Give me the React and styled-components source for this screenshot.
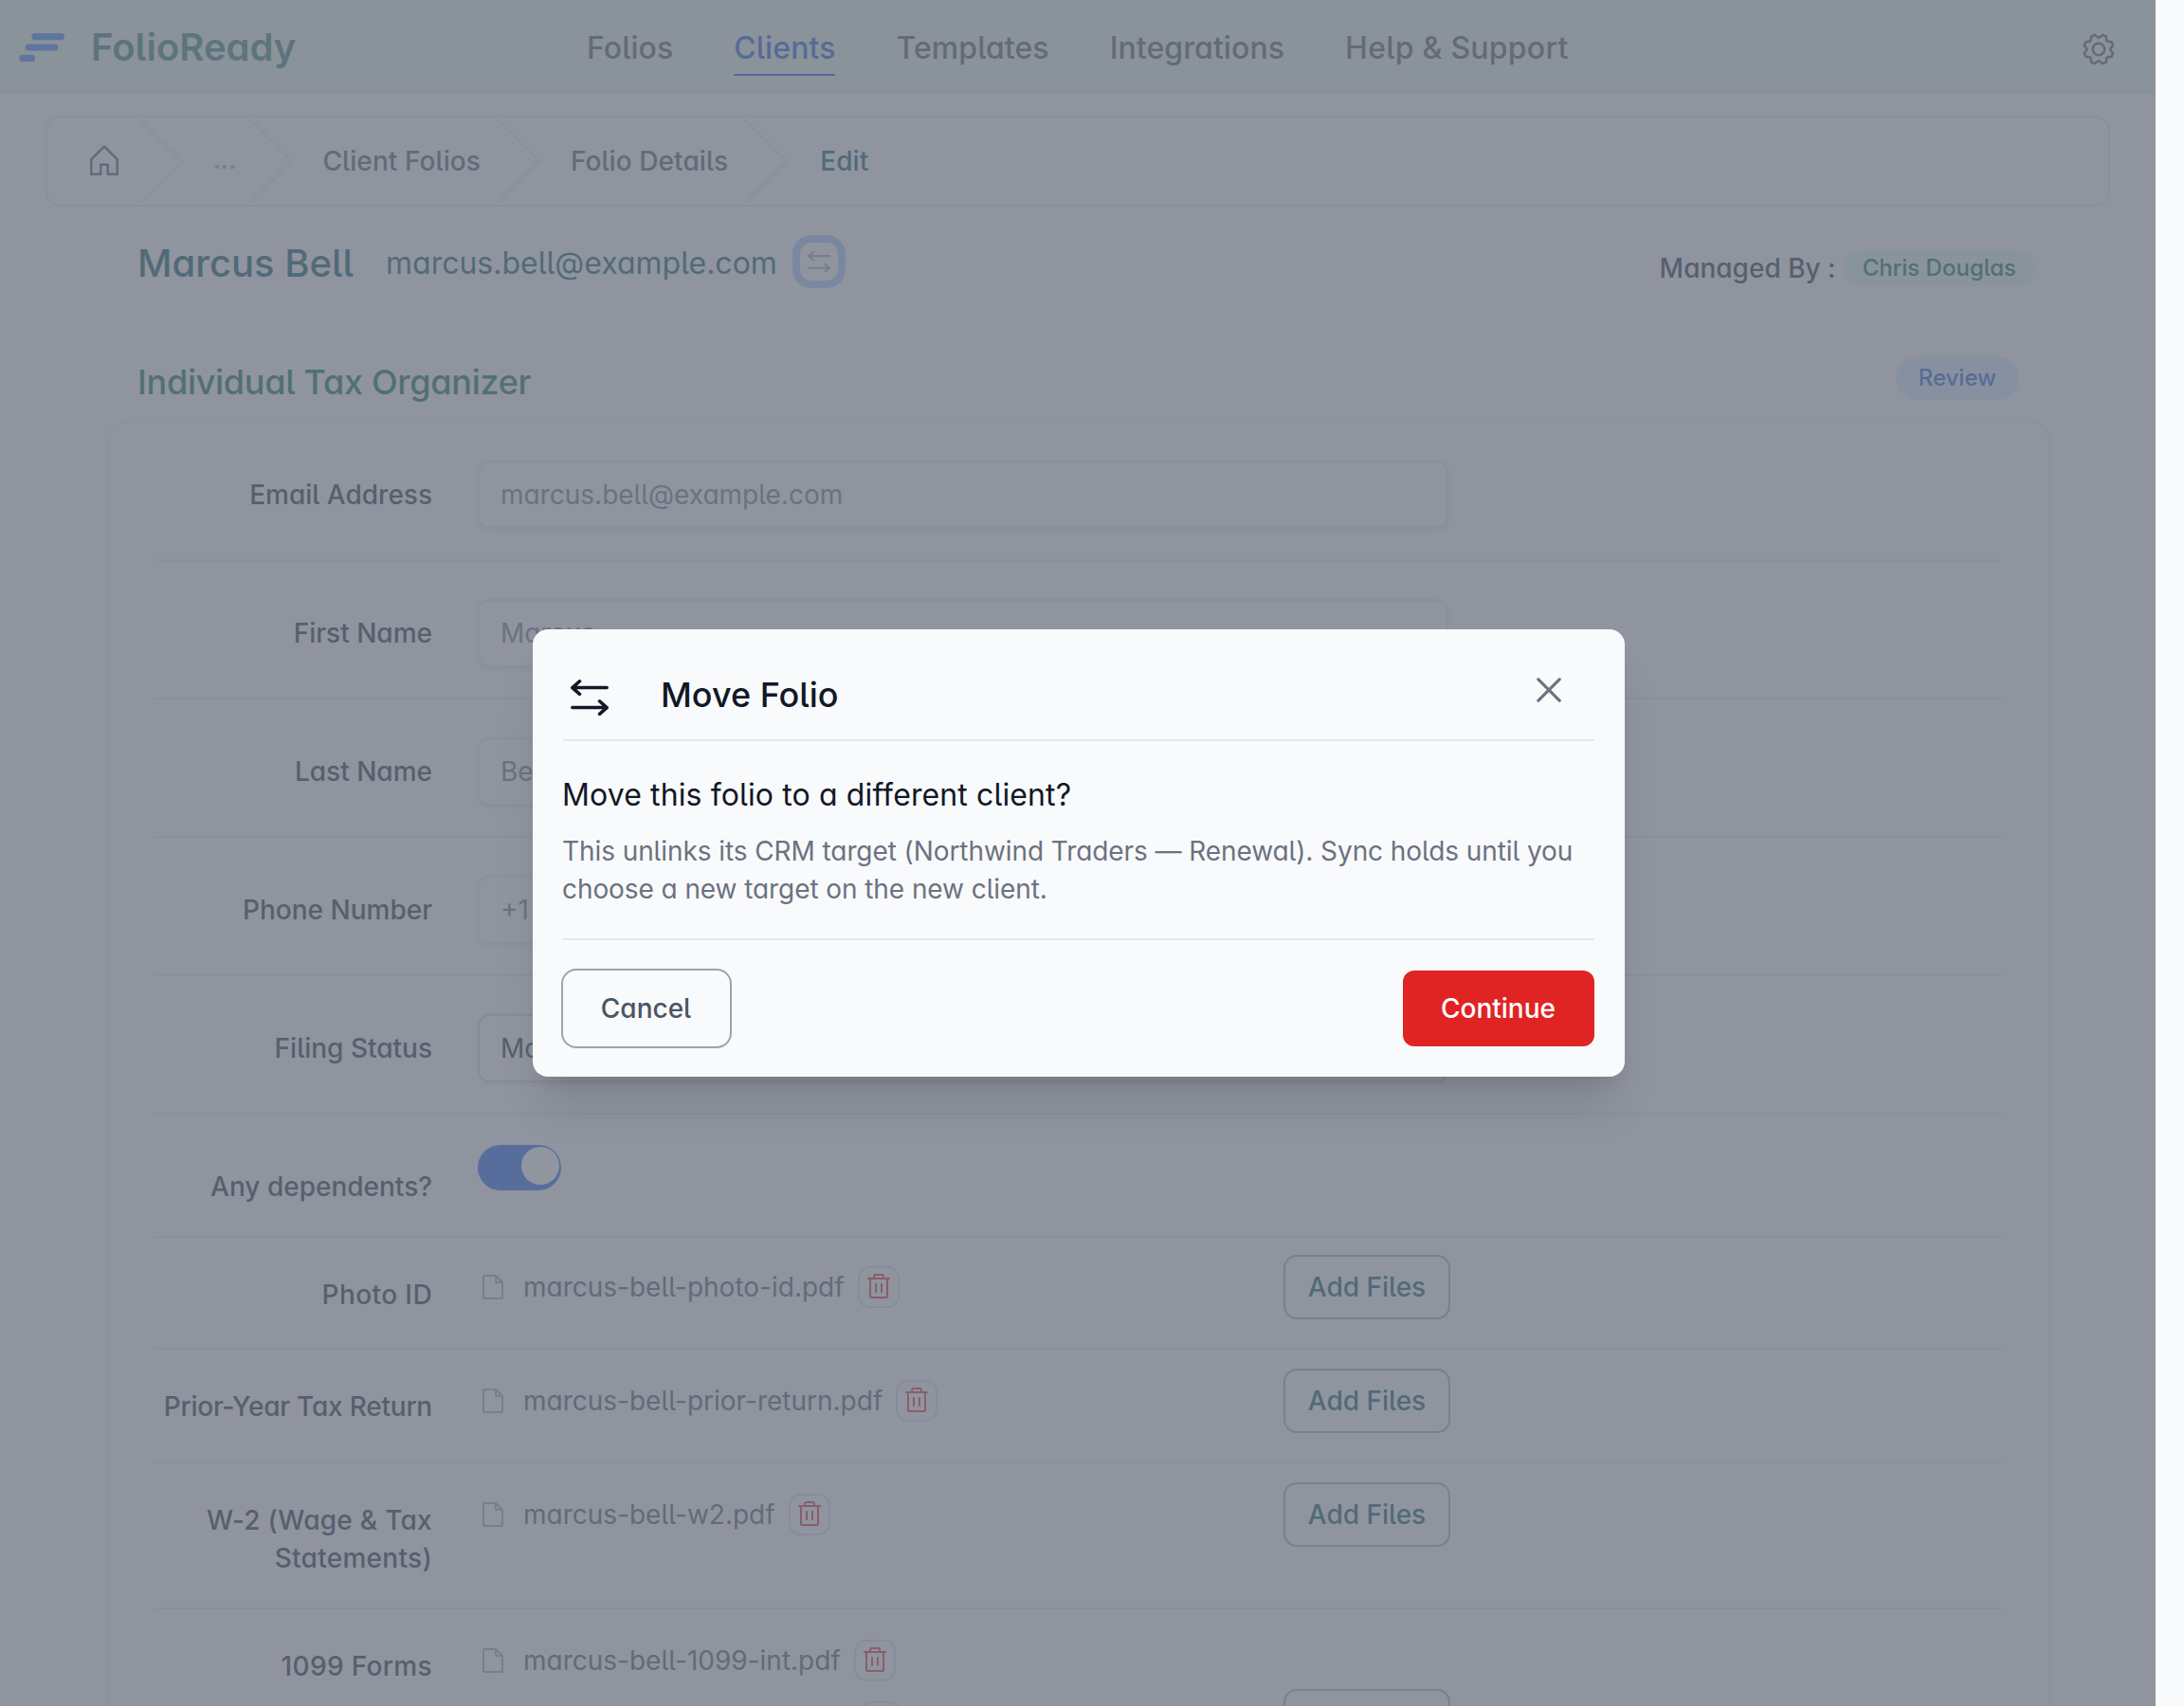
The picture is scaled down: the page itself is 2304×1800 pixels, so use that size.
import React from 'react';
import styled, { createGlobalStyle, css } from 'styled-components';
import { PiFile, PiGear, PiHouse, PiTrash, PiX } from 'react-icons/pi';

const c = {
  page: '#f9fafb',
  line: '#e5e7eb',
  gray400: '#9ca3af',
  gray500: '#6b7280',
  gray600: '#4b5563',
  gray800: '#1f2937',
  gray900: '#111827',
  teal: '#05535f',
  green: '#046c4e',
  blue: '#1a56db',
  blueSolid: '#1c64f2',
  red: '#e02424',
};

const GlobalStyle = createGlobalStyle`
  * { box-sizing: border-box; }
  body {
    margin: 0;
    background: ${c.page};
    font-family: Inter, 'Liberation Sans', sans-serif;
    font-feature-settings: 'cv11', 'cv05';
    font-size: 28px;
    line-height: 40px;
    color: ${c.gray800};
  }
  button { font: inherit; font-feature-settings: inherit; padding: 0; border: 0; background: none; }
  svg { display: block; flex: none; }
`;

const Viewport = styled.div`
  position: relative;
  width: 2274px;
  height: 1800px;
  overflow: hidden;
`;

const TopBar = styled.header`
  display: flex;
  align-items: flex-start;
  height: 98px;
  padding-left: 20px;
  padding-right: 40px;
  background: rgb(230, 241, 229);
  border-bottom: 2px solid ${c.line};
`;

const Brand = styled.div`
  display: flex;
  gap: 26px;
  width: 599px;
  padding-top: 26px;
  font-size: 40px;
  font-weight: 600;
  line-height: 48px;
  color: rgb(52, 124, 118);

  svg { margin-top: 9px; }
`;

const Nav = styled.nav`
  display: flex;
  gap: 64px;
  flex: 1;
  padding-top: 27px;
`;

const NavLink = styled.a`
  padding-bottom: 3px;
  font-size: 32px;
  font-weight: 500;
  line-height: 48px;
  letter-spacing: ${(p) => p.$tracking || '0.08px'};
  white-space: nowrap;
  color: ${(p) => (p.$active ? c.blue : c.gray600)};
  border-bottom: 2px solid ${(p) => (p.$active ? c.blue : 'transparent')};
`;

const SettingsButton = styled.button`
  margin-top: 32px;
  color: ${c.gray600};
`;

const Crumbs = styled.nav`
  display: flex;
  align-items: center;
  height: 96px;
  margin: 24px 48px 0;
  padding-left: 40px;
  border: 2px solid ${c.line};
  border-radius: 16px;
  font-weight: 500;
  color: ${c.gray600};
`;

const Crumb = styled.span`
  display: flex;
  align-items: center;
  margin-left: 16px;
  letter-spacing: 0.08px;
  white-space: nowrap;
  color: ${(p) => (p.$current ? c.teal : 'inherit')};

  svg { margin-right: ${(p) => (p.$current ? 33 : 31)}px; color: ${c.line}; }
`;

const Ellipsis = styled.span`
  width: 20.5px;
  font-size: 24px;
  font-weight: 700;
  color: ${c.gray400};
`;

const ClientBar = styled.section`
  display: flex;
  align-items: center;
  justify-content: space-between;
  height: 56px;
  margin: 30px 127px 0 145px;
`;

const Identity = styled.div`
  display: flex;
  align-items: center;
  color: ${c.teal};
`;

const ClientName = styled.h1`
  margin: 3px 34px 0 0;
  font-size: 40px;
  font-weight: 500;
  line-height: 56px;
`;

const ClientEmail = styled.span`
  padding-top: 4px;
  font-size: 32px;
  margin-right: 24px;
`;

const SwapButton = styled.button`
  display: flex;
  align-items: center;
  justify-content: center;
  width: 40px;
  height: 40px;
  border-radius: 12px;
  color: ${c.gray400};
  box-shadow: 0 0 0 8px #a4cafe;
`;

const Manager = styled.div`
  display: flex;
  align-items: center;
  gap: 8px;
  padding-top: 14px;
  font-weight: 500;
  line-height: 38px;
`;

const Pill = styled.span`
  font-size: 24px;
  font-weight: 500;
  border-radius: 24px;
  ${(p) =>
    p.$tone === 'blue'
      ? css`
          padding: 0 24px;
          line-height: 46px;
          color: ${c.blue};
          background: #dbeafe;
        `
      : css`
          padding: 0 20px;
          line-height: 38px;
          color: ${c.green};
          background: #def7ec;
        `}
`;

const SectionBar = styled.div`
  display: flex;
  justify-content: space-between;
  align-items: flex-start;
  height: 68px;
  margin: 72px 144px 0 145px;
`;

const SectionTitle = styled.h2`
  margin: 3px 0 0;
  font-size: 36px;
  font-weight: 500;
  line-height: 48px;
  letter-spacing: -0.28px;
  color: ${c.green};
`;

const Card = styled.form`
  width: 2050px;
  margin: 0 113px;
  padding: 0 48px;
  border: 2px solid #eceef1;
  border-radius: 24px;
  box-shadow: 0 1px 5px rgba(0, 0, 0, 0.08);
`;

const Row = styled.div`
  display: grid;
  grid-template-columns: 293px 1026px;
  column-gap: 48px;
  align-items: start;
  height: ${(p) => p.$height}px;
  border-bottom: 2px solid ${c.line};
`;

const Label = styled.label`
  padding-top: ${(p) => p.$top}px;
  font-weight: 500;
  text-align: right;
  letter-spacing: ${(p) => p.$tracking || 0}px;
`;

const Field = styled.div`
  display: flex;
  align-items: center;
  width: 1024px;
  height: 72px;
  margin-top: 40px;
  padding: 0 22px;
  border: 2px solid ${(p) => (p.$select ? '#d1d5db' : c.line)};
  border-radius: 12px;
  box-shadow: 0 2px 4px rgba(0, 0, 0, 0.08);
  color: ${(p) => (p.$select ? c.gray800 : c.gray500)};
`;

const Toggle = styled.div`
  width: 88px;
  height: 48px;
  margin-top: 32px;
  padding: 2px 2px 0 46px;
  border-radius: 24px;
  background: ${c.blueSolid};
`;

const Knob = styled.div`
  width: 40px;
  height: 40px;
  border-radius: 50%;
  background: #fff;
`;

const Files = styled.div`
  display: flex;
  justify-content: space-between;
  align-items: flex-end;
  margin-top: ${(p) => p.$top}px;
`;

const FileList = styled.div`
  align-self: flex-start;
  padding: 1px 0;
`;

const FileItem = styled.div`
  display: flex;
  align-items: center;
  height: 65px;
  color: ${c.gray600};

  > svg { margin-right: 16px; color: ${c.gray400}; }
`;

const TrashButton = styled.button`
  display: flex;
  align-items: center;
  justify-content: center;
  width: 44px;
  height: 44px;
  margin-left: 14px;
  border: 2px solid #d8dbe0;
  border-radius: 13px;
  color: ${c.red};
`;

const AddButton = styled.button`
  width: 176px;
  height: 68px;
  border: 2px solid #9bb898;
  border-radius: 14px;
  font-weight: 500;
  color: ${c.teal};
`;

const Overlay = styled.div`
  position: absolute;
  inset: 0;
  display: flex;
  align-items: center;
  justify-content: center;
  background: rgba(107, 114, 128, 0.75);
`;

const Dialog = styled.div`
  width: 1152px;
  height: 472px;
  margin-left: 2px;
  padding: 32px;
  border-radius: 16px;
  background: #f9fafc;
  color: ${c.gray900};
  box-shadow: 0 40px 50px -10px rgba(0, 0, 0, 0.1), 0 16px 20px -12px rgba(0, 0, 0, 0.1);
`;

const DialogHead = styled.div`
  display: flex;
  align-items: flex-start;
  height: 86px;
  padding: 21px 28px 0 8px;
  border-bottom: 2px solid ${c.line};
`;

const DialogTitle = styled.h3`
  flex: 1;
  margin: -8px 0 0 55px;
  font-size: 36px;
  font-weight: 500;
  line-height: 48px;
`;

const CloseButton = styled.button`
  margin-top: -9px;
  color: ${c.gray500};

  svg { stroke: currentColor; stroke-width: 5px; }
`;

const DialogBody = styled.div`
  height: 210px;
  padding-top: 33px;
  border-bottom: 2px solid ${c.line};
`;

const Question = styled.p`
  margin: 0 0 0 -1px;
  font-size: 32px;
  line-height: 48px;
  letter-spacing: 0.12px;
`;

const Note = styled.p`
  margin: 15px -8px 0 -1px;
  letter-spacing: -0.08px;
  color: ${c.gray500};
`;

const Actions = styled.div`
  display: flex;
  justify-content: space-between;
  padding-top: 32px;
`;

const DialogButton = styled.button`
  height: 80px;
  width: ${(p) => (p.$danger ? 202 : 176)}px;
  padding-right: 1px;
  border-radius: ${(p) => (p.$danger ? 12 : 14)}px;
  font-weight: 500;
  color: ${(p) => (p.$danger ? '#fff' : c.gray600)};
  background: ${(p) => (p.$danger ? c.red : 'transparent')};
  box-shadow: ${(p) => (p.$danger ? 'none' : `0 0 0 2px ${c.gray400}`)};
`;

const BrandMark = () => (
  <svg width="50" height="30" viewBox="0 0 50 30" fill="#3b82f6">
    <rect x="13.3" y="0" width="34.7" height="7.2" rx="3.6" />
    <rect x="6.7" y="11.4" width="34.7" height="7.2" rx="3.6" />
    <rect x="0.2" y="22.8" width="16.8" height="7.2" rx="3.6" />
  </svg>
);

const Chevron = () => (
  <svg width="48" height="88" viewBox="0 0 24 44" fill="currentColor">
    <path d="M.293 0l22 22-22 22h1.414l22-22-22-22H.293z" />
  </svg>
);

const SwapIcon = ({ width }) => (
  <svg
    width={width}
    height={width * 0.95}
    viewBox="0 0 40 38"
    fill="none"
    stroke="currentColor"
    strokeWidth="3.5"
    strokeLinecap="round"
    strokeLinejoin="round"
  >
    <path d="M38.2 8.6H1.8M9.5 1.8 1.8 8.6l7.7 6.8M1.8 29.6h36.4M30.5 22.8l7.7 6.8-7.7 6.8" />
  </svg>
);

const links = ['Folios', 'Clients', 'Templates', 'Integrations', 'Help & Support'];

const fields = [
  { label: 'Email Address', value: 'marcus.bell@example.com' },
  { label: 'First Name', value: 'Marcus' },
  { label: 'Last Name', value: 'Bell' },
  { label: 'Phone Number', value: '+1' },
  { label: 'Filing Status', value: 'Married', select: true },
];

const uploads = [
  { label: 'Photo ID', files: ['marcus-bell-photo-id.pdf'], height: 118, top: 18, tracking: 0.4 },
  { label: 'Prior-Year Tax Return', files: ['marcus-bell-prior-return.pdf'], height: 120, top: 20, tracking: -0.22 },
  { label: 'W-2 (Wage & Tax Statements)', files: ['marcus-bell-w2.pdf'], height: 154, top: 20, tracking: 0.28 },
  {
    label: '1099 Forms',
    files: ['marcus-bell-1099-int.pdf', 'marcus-bell-1099-div.pdf'],
    height: 186,
    top: 20,
    tracking: 0.35,
  },
];

export default function App() {
  return (
    <>
      <GlobalStyle />
      <Viewport>
        <TopBar>
          <Brand>
            <BrandMark />
            FolioReady
          </Brand>
          <Nav>
            {links.map((l) => (
              <NavLink key={l} $active={l === 'Clients'} $tracking={l.startsWith('Help') ? '0.25px' : undefined}>
                {l}
              </NavLink>
            ))}
          </Nav>
          <SettingsButton aria-label="Settings">
            <PiGear size={40} />
          </SettingsButton>
        </TopBar>

        <Crumbs>
          <PiHouse size={40} />
          <Crumb>
            <Chevron />
            <Ellipsis>...</Ellipsis>
          </Crumb>
          <Crumb>
            <Chevron />
            Client Folios
          </Crumb>
          <Crumb>
            <Chevron />
            Folio Details
          </Crumb>
          <Crumb $current>
            <Chevron />
            Edit
          </Crumb>
        </Crumbs>

        <ClientBar>
          <Identity>
            <ClientName>Marcus Bell</ClientName>
            <ClientEmail>marcus.bell@example.com</ClientEmail>
            <SwapButton aria-label="Move folio">
              <SwapIcon width={24} />
            </SwapButton>
          </Identity>
          <Manager>
            Managed By :<Pill>Chris Douglas</Pill>
          </Manager>
        </ClientBar>

        <SectionBar>
          <SectionTitle>Individual Tax Organizer</SectionTitle>
          <Pill $tone="blue">Review</Pill>
        </SectionBar>

        <Card>
          {fields.map((f) => (
            <Row key={f.label} $height={146}>
              <Label $top={56}>{f.label}</Label>
              <Field $select={f.select}>{f.value}</Field>
            </Row>
          ))}
          <Row $height={130}>
            <Label $top={56}>Any dependents?</Label>
            <Toggle>
              <Knob />
            </Toggle>
          </Row>
          {uploads.map((u) => (
            <Row key={u.label} $height={u.height}>
              <Label $top={40} $tracking={u.tracking}>
                {u.label}
              </Label>
              <Files $top={u.top}>
                <FileList>
                  {u.files.map((name) => (
                    <FileItem key={name}>
                      <PiFile size={32} />
                      {name}
                      <TrashButton type="button" aria-label="Delete file">
                        <PiTrash size={32} />
                      </TrashButton>
                    </FileItem>
                  ))}
                </FileList>
                <AddButton type="button">Add Files</AddButton>
              </Files>
            </Row>
          ))}
        </Card>

        <Overlay>
          <Dialog role="dialog">
            <DialogHead>
              <SwapIcon width={40} />
              <DialogTitle>Move Folio</DialogTitle>
              <CloseButton aria-label="Close">
                <PiX size={40} />
              </CloseButton>
            </DialogHead>
            <DialogBody>
              <Question>Move this folio to a different client?</Question>
              <Note>
                This unlinks its CRM target (Northwind Traders — Renewal). Sync holds until you choose a new target on
                the new client.
              </Note>
            </DialogBody>
            <Actions>
              <DialogButton>Cancel</DialogButton>
              <DialogButton $danger>Continue</DialogButton>
            </Actions>
          </Dialog>
        </Overlay>
      </Viewport>
    </>
  );
}
